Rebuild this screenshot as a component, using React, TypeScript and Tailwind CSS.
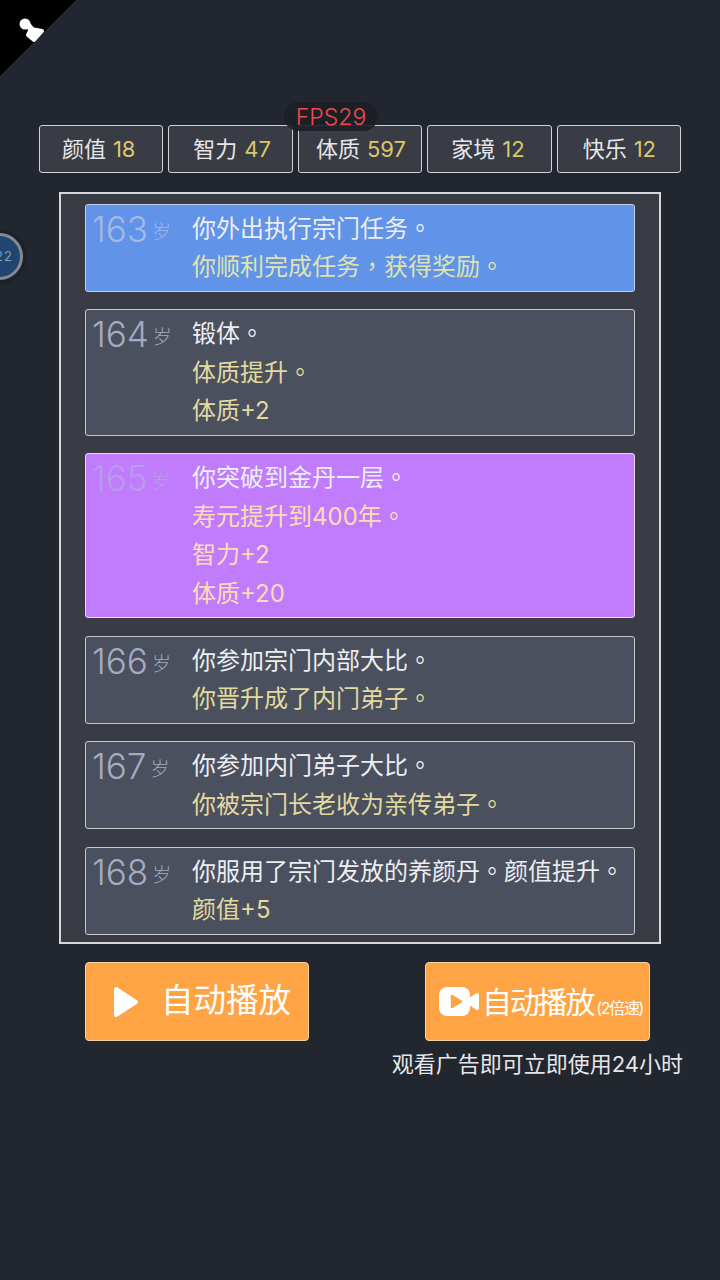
const stats = [
  { label: "颜值", value: 18, shift: "-translate-x-[2.5px]" },
  { label: "智力", value: 47, shift: "translate-x-[1.5px]" },
  { label: "体质", value: 597, shift: "translate-x-[1px]" },
  { label: "家境", value: 12, shift: "-translate-x-[1.5px]" },
  { label: "快乐", value: 12, shift: "translate-x-[0.5px]" },
];

type Log = { age: number; lines: string[]; tone?: "blue" | "purple" };

const logs: Log[] = [
  { age: 163, lines: ["你外出执行宗门任务。", "你顺利完成任务，获得奖励。"], tone: "blue" },
  { age: 164, lines: ["锻体。", "体质提升。", "体质+2"] },
  { age: 165, lines: ["你突破到金丹一层。", "寿元提升到400年。", "智力+2", "体质+20"], tone: "purple" },
  { age: 166, lines: ["你参加宗门内部大比。", "你晋升成了内门弟子。"] },
  { age: 167, lines: ["你参加内门弟子大比。", "你被宗门长老收为亲传弟子。"] },
  { age: 168, lines: ["你服用了宗门发放的养颜丹。颜值提升。", "颜值+5"] },
];

// punctuation sits in the middle of its cell in the original
function Punctuated({ text }: { text: string }) {
  return (
    <>
      {text.split(/([。，])/).map((part, i) =>
        part === "。" || part === "，" ? (
          <span key={i} className="font-['Noto_Sans_CJK_TC'] leading-[0]">
            {part}
          </span>
        ) : (
          part
        ),
      )}
    </>
  );
}

function LogRow({ log }: { log: Log }) {
  const bg =
    log.tone === "blue"
      ? "bg-[#6193e8] border-[#c3d3ee]"
      : log.tone === "purple"
        ? "bg-[#c07cfd] border-[#e8d2f8]"
        : "bg-[#4a505d] border-[#c4c7cd]";
  const accent =
    log.tone === "blue"
      ? "text-[#dfe3b0]"
      : log.tone === "purple"
        ? "text-[#fbdcb4]"
        : "text-[#e3da9f]";
  const age =
    log.tone === "blue"
      ? "text-[#a5b8e6]"
      : log.tone === "purple"
        ? "text-[#b89cea]"
        : "text-[#a6aac2]";
  return (
    <div className={`flex rounded-[3px] border pt-[5.2px] pb-[4px] ${bg}`}>
      <div className={`flex w-[106px] shrink-0 items-start pl-[6px] ${age}`}>
        <span className="text-[35px] leading-[38px] font-light">{log.age}</span>
        <span className="ml-[4px] pt-[9px] text-[19px] leading-[28px] font-light">岁</span>
      </div>
      <div className="flex flex-col text-[24px] leading-[38.4px]">
        {log.lines.map((line, i) => (
          <p key={i} className={i === 0 ? "text-[#eceef2]" : accent}>
            <Punctuated text={line} />
          </p>
        ))}
      </div>
    </div>
  );
}

export default function App() {
  return (
    <div
      className="relative flex h-[1280px] w-[720px] flex-col overflow-hidden bg-[#22262f] pt-[125px]"
      style={{ fontFamily: 'Inter, "Noto Sans CJK SC", sans-serif' }}
    >
      {/* corner badge */}
      <svg className="absolute top-0 left-0" width="76" height="76" viewBox="0 0 76 76">
        <polygon points="0,0 76,0 0,76" fill="#000" />
        <circle cx="25" cy="24" r="5.5" fill="#fff" />
        <polygon points="24,25 30,23 35,29 29,31" fill="#fff" />
        <polygon points="31,29 42,31 34,40 28,35" fill="#fff" stroke="#fff" strokeWidth="4" strokeLinejoin="round" />
      </svg>

      {/* fps */}
      <div className="absolute top-[102px] left-[284px] z-10 h-[29px] w-[94px] rounded-[15px] bg-[#1c1f26e6] text-center text-[23px] leading-[31px] font-light text-[#ef4a50]">
        FPS29
      </div>

      {/* floating timer */}
      <div className="absolute top-[233px] left-[-24px] flex h-[47px] w-[47px] items-center justify-center rounded-full border-[3px] border-[#858a92] bg-[#1f4570] pl-[9px] text-[13px] tracking-[1px] text-[#8a9db3] shadow-[0_0_0_4px_#1e2127]">
        22
      </div>

      {/* stats */}
      <div className="flex gap-[5px] px-[39px]">
        {stats.map((s) => (
          <div
            key={s.label}
            className="flex h-[48px] flex-1 items-center justify-center rounded-[3px] border border-[#cfd1d5] bg-[#393c45] text-[22px] text-[#e6e6e8]"
          >
            <div className={`flex gap-[7px] ${s.shift}`}>
              <span>{s.label}</span>
              <span className="text-[#dcc76a]">{s.value}</span>
            </div>
          </div>
        ))}
      </div>

      {/* log panel */}
      <div className="mx-[59px] mt-[19px] flex h-[752px] flex-col gap-[17.6px] border-2 border-[#d5d7da] bg-[#393c44] px-[24px] pt-[9.6px]">
        {logs.map((log) => (
          <LogRow key={log.age} log={log} />
        ))}
      </div>

      {/* buttons */}
      <div className="mt-[18px] flex justify-between pr-[70px] pl-[85px]">
        <button className="flex h-[79px] w-[224px] items-center rounded-[4px] border border-[#f6d3a6] bg-[#ffa445] pl-[27px] text-white">
          <svg width="26" height="32" viewBox="0 0 26 32">
            <path d="M3 3 L23 16 L3 29 Z" fill="#fff" stroke="#fff" strokeWidth="4" strokeLinejoin="round" />
          </svg>
          <span className="ml-[22px] text-[32.5px] leading-none">自动播放</span>
        </button>
        <button className="flex h-[79px] w-[225px] items-center rounded-[4px] border border-[#f6d3a6] bg-[#ffa445] pl-[13px] text-white">
          <svg width="41" height="30" viewBox="0 0 41 30">
            <rect x="0" y="0" width="31" height="29" rx="8" fill="#fff" />
            <path d="M30 11 L37 6.5 Q40 5 40 8 V21 Q40 24 37 22.5 L30 18 Z" fill="#fff" />
            <path d="M13 9 L22 14.5 L13 20 Z" fill="#ffa445" stroke="#ffa445" strokeWidth="2.5" strokeLinejoin="round" />
          </svg>
          <span className="ml-[2px] text-[30px] leading-none tracking-[-2.2px]">自动播放</span>
          <span className="mt-[12px] ml-[3px] text-[16px] leading-none tracking-[-1.3px]">(2倍速)</span>
        </button>
      </div>
      <p className="mt-[8px] pr-[37px] text-right text-[22px] leading-[30px] text-[#e6e6e8]">
        观看广告即可立即使用24小时
      </p>
    </div>
  );
}
